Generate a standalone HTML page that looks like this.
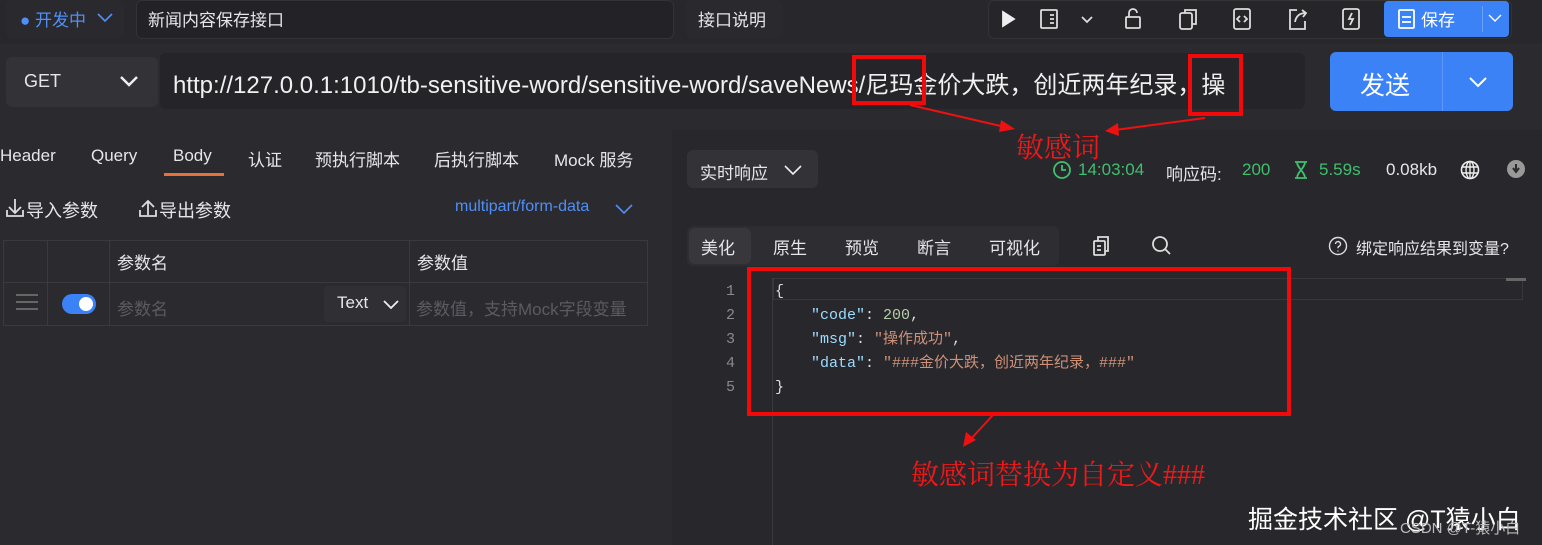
<!DOCTYPE html>
<html><head><meta charset="utf-8"><style>
*{margin:0;padding:0;box-sizing:border-box}
body{width:1542px;height:545px;overflow:hidden;background:#2b2a2f;font-family:"Liberation Sans","Noto Sans CJK SC",sans-serif;color:#e6e6e8;position:relative}
.a{position:absolute;white-space:nowrap}
.box{position:absolute;background:#232226;border-radius:6px}
.red{position:absolute;border:4px solid #f20a0a}
.rt{position:absolute;color:#f01818;font-family:"Liberation Serif","Noto Serif CJK SC",serif;white-space:nowrap}
.mono{font-family:"Liberation Mono","DejaVu Sans Mono","Noto Sans CJK SC",monospace;font-size:15px}
svg{position:absolute}
.ic path,.ic rect,.ic circle{stroke:#ddd;stroke-width:1.8;fill:none}
</style></head><body>
<div class="a" style="left:672px;top:130px;width:870px;height:415px;background:#28272c"></div>
<div class="a" style="left:0;top:0;width:1542px;height:44px;background:#28272c"></div>
<!-- top row -->
<div class="box" style="left:6px;top:0;width:118px;height:38px;background:#2a2a2e"></div>
<div class="a" style="left:20px;top:6px;font-size:17px;color:#4f8ff7">● 开发中</div>
<svg style="left:96px;top:12px" width="18" height="12"><path d="M2 2l7 7 7-7" stroke="#4f8ff7" stroke-width="1.6" fill="none"/></svg>
<div class="box" style="left:136px;top:0;width:538px;height:39px;border:1px solid #333"></div>
<div class="a" style="left:148px;top:6px;font-size:17px">新闻内容保存接口</div>
<div class="box" style="left:686px;top:0;width:96px;height:38px;background:#2a2a2e"></div>
<div class="a" style="left:698px;top:6px;font-size:17px">接口说明</div>
<div class="box" style="left:988px;top:0;width:524px;height:39px;background:#262529;border:1px solid #333"></div>
<svg class="ic" style="left:1000px;top:9px" width="16" height="20"><path d="M3 3l11 7-11 7z" style="fill:#eee;stroke:#eee"/></svg>
<svg class="ic" style="left:1038px;top:8px" width="60" height="22"><rect x="3" y="2" width="16" height="18" rx="1"/><path d="M12 7h4M12 11h4M12 15h4"/><path d="M44 9l5 5 5-5" stroke-width="1.4"/></svg>
<svg class="ic" style="left:1123px;top:6px" width="20" height="24"><rect x="3" y="11" width="14" height="11" rx="1"/><path d="M6 11V7a4 4 0 0 1 8 0"/></svg>
<svg class="ic" style="left:1177px;top:7px" width="24" height="24"><rect x="3" y="6" width="12" height="16" rx="2"/><path d="M8 6V3h11v14h-4"/></svg>
<svg class="ic" style="left:1231px;top:7px" width="22" height="24"><rect x="3" y="2" width="16" height="20" rx="2"/><path d="M9 9l-3 3 3 3M13 9l3 3-3 3" stroke-width="1.3"/></svg>
<svg class="ic" style="left:1286px;top:7px" width="24" height="24"><path d="M11 3H4v19h15v-8"/><path d="M9 15c1-6 5-9 11-9M16 3l4 3-3 4"/></svg>
<svg class="ic" style="left:1340px;top:7px" width="22" height="24"><rect x="3" y="2" width="16" height="20" rx="2"/><path d="M12 6l-3 6h4l-3 6"/></svg>
<div class="a" style="left:1384px;top:1px;width:125px;height:36px;background:#3b82f6;border-radius:4px"></div>
<svg class="ic" style="left:1397px;top:8px" width="20" height="22"><rect x="2" y="2" width="15" height="18" rx="1" style="stroke:#fff"/><path d="M5 9h9M5 14h9" style="stroke:#fff"/></svg>
<div class="a" style="left:1421px;top:6px;font-size:17px;color:#fff">保存</div>
<div class="a" style="left:1482px;top:6px;width:1px;height:26px;background:#6aa2f8"></div>
<svg style="left:1487px;top:13px" width="16" height="10"><path d="M2 2l6 6 6-6" stroke="#fff" stroke-width="1.4" fill="none"/></svg>
<!-- url row -->
<div class="box" style="left:6px;top:57px;width:152px;height:50px;background:#333237"></div>
<div class="a" style="left:24px;top:71px;font-size:18px">GET</div>
<svg style="left:118px;top:74px" width="22" height="14"><path d="M3 3l8 8 8-8" stroke="#eee" stroke-width="2.5" fill="none"/></svg>
<div class="box" style="left:160px;top:53px;width:1145px;height:56px;background:#252428"></div>
<div class="a" style="left:173px;top:65px;font-size:24px;color:#f0f0f0">http://127.0.0.1:1010/tb-sensitive-word/sensitive-word/saveNews/尼玛金价大跌，创近两年纪录，操</div>
<div class="a" style="left:1330px;top:52px;width:183px;height:59px;background:#3b82f6;border-radius:6px"></div>
<div class="a" style="left:1360px;top:66px;font-size:25px;color:#fff">发送</div>
<div class="a" style="left:1442px;top:52px;width:1px;height:59px;background:#5d97f8"></div>
<svg style="left:1467px;top:75px" width="22" height="14"><path d="M3 3l8 8 8-8" stroke="#fff" stroke-width="2" fill="none"/></svg>
<div class="red" style="left:852px;top:55px;width:74px;height:50px"></div>
<div class="red" style="left:1188px;top:54px;width:55px;height:62px"></div>
<svg style="left:900px;top:100px" width="330" height="50"><path d="M10 5L105 27" stroke="#e11" stroke-width="2"/><path d="M115 29l-14-9-2 12z" fill="#e11"/><path d="M305 18L215 30" stroke="#e11" stroke-width="2"/><path d="M205 31l13-8 1 13z" fill="#e11"/></svg>
<div class="rt" style="left:1016px;top:126px;font-size:28px">敏感词</div>
<!-- left tabs -->
<div class="a" style="left:0;top:146px;font-size:17px">Header</div>
<div class="a" style="left:91px;top:146px;font-size:17px">Query</div>
<div class="a" style="left:173px;top:146px;font-size:17px">Body</div>
<div class="a" style="left:164px;top:173px;width:60px;height:3px;background:#e8713a"></div>
<div class="a" style="left:248px;top:146px;font-size:17px">认证</div>
<div class="a" style="left:315px;top:146px;font-size:17px">预执行脚本</div>
<div class="a" style="left:434px;top:146px;font-size:17px">后执行脚本</div>
<div class="a" style="left:554px;top:146px;font-size:17px">Mock 服务</div>
<svg class="ic" style="left:4px;top:197px" width="22" height="22"><path d="M11 2v14M5 10l6 6 6-6M3 13v6h16v-6"/></svg>
<div class="a" style="left:26px;top:197px;font-size:18px">导入参数</div>
<svg class="ic" style="left:137px;top:197px" width="22" height="22"><path d="M11 18V4M5 10l6-6 6 6M3 13v6h16v-6"/></svg>
<div class="a" style="left:159px;top:197px;font-size:18px">导出参数</div>
<div class="a" style="left:455px;top:198px;font-size:16px;color:#4f8ff7">multipart/form-data</div>
<svg style="left:614px;top:203px" width="20" height="12"><path d="M2 2l8 8 8-8" stroke="#4f8ff7" stroke-width="1.6" fill="none"/></svg>
<!-- table -->
<div class="a" style="left:3px;top:240px;width:645px;height:86px;border:1px solid #3a393e"></div>
<div class="a" style="left:3px;top:282px;width:645px;height:1px;background:#3a393e"></div>
<div class="a" style="left:47px;top:240px;width:1px;height:86px;background:#3a393e"></div>
<div class="a" style="left:109px;top:240px;width:1px;height:86px;background:#3a393e"></div>
<div class="a" style="left:409px;top:240px;width:1px;height:86px;background:#3a393e"></div>
<div class="a" style="left:117px;top:249px;font-size:17px">参数名</div>
<div class="a" style="left:417px;top:249px;font-size:17px">参数值</div>
<svg style="left:15px;top:292px" width="24" height="20"><path d="M1 3h22M1 10h22M1 17h22" stroke="#666" stroke-width="2"/></svg>
<div class="a" style="left:62px;top:294px;width:34px;height:20px;background:#3b82f6;border-radius:10px"></div>
<div class="a" style="left:79px;top:297px;width:14px;height:14px;background:#fff;border-radius:7px"></div>
<div class="a" style="left:117px;top:295px;font-size:17px;color:#5c5b60">参数名</div>
<div class="a" style="left:324px;top:286px;width:82px;height:36px;background:#302f34;border-radius:4px"></div>
<div class="a" style="left:337px;top:293px;font-size:17px">Text</div>
<svg style="left:382px;top:299px" width="18" height="12"><path d="M2 2l7 7 7-7" stroke="#eee" stroke-width="1.8" fill="none"/></svg>
<div class="a" style="left:416px;top:295px;font-size:17px;color:#5c5b60">参数值，支持Mock字段变量</div>
<!-- response header -->
<div class="box" style="left:687px;top:150px;width:131px;height:38px;background:#333237"></div>
<div class="a" style="left:700px;top:159px;font-size:17px">实时响应</div>
<svg style="left:783px;top:164px" width="20" height="12"><path d="M2 2l8 8 8-8" stroke="#eee" stroke-width="1.6" fill="none"/></svg>
<svg style="left:1052px;top:160px" width="20" height="20"><circle cx="10" cy="10" r="8" stroke="#3fbf6e" stroke-width="1.8" fill="none"/><path d="M10 5v5h4" stroke="#3fbf6e" stroke-width="1.8" fill="none"/></svg>
<div class="a" style="left:1078px;top:160px;font-size:17px;color:#3fbf6e">14:03:04</div>
<div class="a" style="left:1166px;top:160px;font-size:17px">响应码:</div>
<div class="a" style="left:1242px;top:160px;font-size:17px;color:#3fbf6e">200</div>
<svg style="left:1293px;top:160px" width="16" height="20"><path d="M2 2h12M2 18h12M4 2c0 6 8 10 8 16M12 2c0 6-8 10-8 16" stroke="#3fbf6e" stroke-width="1.8" fill="none"/></svg>
<div class="a" style="left:1319px;top:160px;font-size:17px;color:#3fbf6e">5.59s</div>
<div class="a" style="left:1386px;top:160px;font-size:17px">0.08kb</div>
<svg style="left:1460px;top:160px" width="20" height="20"><circle cx="10" cy="10" r="8.5" stroke="#eee" stroke-width="1.6" fill="none"/><ellipse cx="10" cy="10" rx="4" ry="8.5" stroke="#eee" stroke-width="1.4" fill="none"/><path d="M2 7h16M2 13h16M10 2v16" stroke="#eee" stroke-width="1.4"/></svg>
<div class="a" style="left:1507px;top:160px;width:18px;height:18px;border-radius:9px;background:#999"></div>
<svg style="left:1510px;top:163px" width="12" height="12"><path d="M6 1v7M3 5l3 4 3-4" stroke="#2b2a2f" stroke-width="2" fill="none"/></svg>
<!-- sub tabs -->
<div class="box" style="left:687px;top:226px;width:372px;height:40px;background:#2e2d32"></div>
<div class="box" style="left:689px;top:228px;width:62px;height:36px;background:#38373c"></div>
<div class="a" style="left:701px;top:234px;font-size:17px">美化</div>
<div class="a" style="left:773px;top:234px;font-size:17px">原生</div>
<div class="a" style="left:845px;top:234px;font-size:17px">预览</div>
<div class="a" style="left:917px;top:234px;font-size:17px">断言</div>
<div class="a" style="left:989px;top:234px;font-size:17px">可视化</div>
<svg class="ic" style="left:1092px;top:235px" width="20" height="22"><rect x="2" y="6" width="11" height="14" rx="1"/><path d="M6 6V2h10v14h-3M5 11h4M5 15h4"/></svg>
<svg class="ic" style="left:1151px;top:235px" width="22" height="22"><circle cx="9" cy="9" r="7"/><path d="M14 14l5 5"/></svg>
<svg class="ic" style="left:1328px;top:236px" width="20" height="20"><circle cx="10" cy="10" r="8.5" style="stroke-width:1.4"/><path d="M7.5 8a2.5 2.5 0 1 1 3.5 2.3c-.8.4-1 1-1 2M10 14.5v1" style="stroke-width:1.4"/></svg>
<div class="a" style="left:1356px;top:235px;font-size:16px">绑定响应结果到变量?</div>
<!-- editor -->
<div class="a" style="left:772px;top:278px;width:1px;height:267px;background:#3b3a3f"></div>
<div class="a" style="left:773px;top:278px;width:750px;height:22px;border:1px solid #38373c"></div>
<div class="a" style="left:1506px;top:278px;width:20px;height:3px;background:#666"></div>
<div class="a mono" style="left:723px;top:280px;color:#8a8a8e;line-height:24px;text-align:right;width:12px">1<br>2<br>3<br>4<br>5</div>
<div class="a mono" style="left:775px;top:280px;line-height:24px;color:#ddd">{<br>&nbsp;&nbsp;&nbsp;&nbsp;<span style="color:#9cdcfe">"code"</span>: <span style="color:#b5cea8">200</span>,<br>&nbsp;&nbsp;&nbsp;&nbsp;<span style="color:#9cdcfe">"msg"</span>: <span style="color:#ce9178">"操作成功"</span>,<br>&nbsp;&nbsp;&nbsp;&nbsp;<span style="color:#9cdcfe">"data"</span>: <span style="color:#ce9178">"###金价大跌，创近两年纪录，###"</span><br>}</div>
<div class="red" style="left:747px;top:267px;width:544px;height:149px"></div>
<svg style="left:955px;top:412px" width="50" height="40"><path d="M38 3L15 28" stroke="#e11" stroke-width="2"/><path d="M8 35l3-15 10 8z" fill="#e11"/></svg>
<div class="rt" style="left:911px;top:453px;font-size:28px">敏感词替换为自定义###</div>
<div class="a" style="left:1248px;top:500px;font-size:25px;color:#fff">掘金技术社区 @T猿小白</div>
<div class="a" style="left:1400px;top:517px;font-size:15px;color:#bbb">CSDN @T-猿小白</div>
</body></html>
